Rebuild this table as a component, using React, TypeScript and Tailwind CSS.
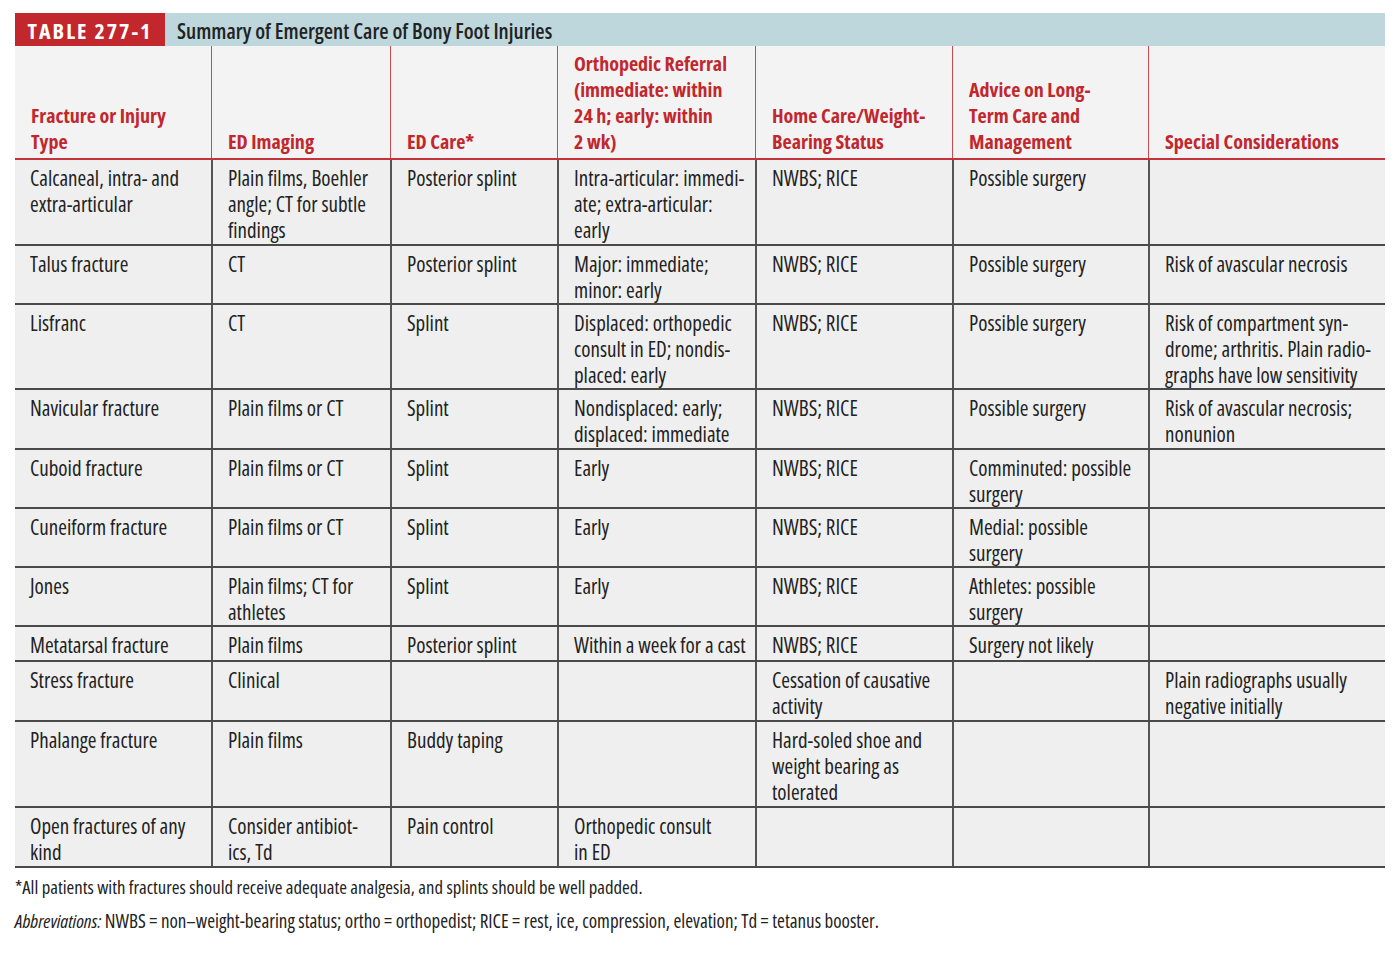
import React from 'react';

const headers: string[][] = [
  ['Fracture or Injury', 'Type'],
  ['ED Imaging'],
  ['ED Care*'],
  ['Orthopedic Referral', '(immediate: within', '24 h; early: within', '2 wk)'],
  ['Home Care/Weight-', 'Bearing Status'],
  ['Advice on Long-', 'Term Care and', 'Management'],
  ['Special Considerations'],
];

type Row = { h: string; cells: string[][] };

const rows: Row[] = [
  {
    h: 'h-[86px]',
    cells: [
      ['Calcaneal, intra- and', 'extra-articular'],
      ['Plain films, Boehler', 'angle; CT for subtle', 'findings'],
      ['Posterior splint'],
      ['Intra-articular: immedi-', 'ate; extra-articular:', 'early'],
      ['NWBS; RICE'],
      ['Possible surgery'],
      [],
    ],
  },
  {
    h: 'h-[59px]',
    cells: [
      ['Talus fracture'],
      ['CT'],
      ['Posterior splint'],
      ['Major: immediate;', 'minor: early'],
      ['NWBS; RICE'],
      ['Possible surgery'],
      ['Risk of avascular necrosis'],
    ],
  },
  {
    h: 'h-[85px]',
    cells: [
      ['Lisfranc'],
      ['CT'],
      ['Splint'],
      ['Displaced: orthopedic', 'consult in ED; nondis-', 'placed: early'],
      ['NWBS; RICE'],
      ['Possible surgery'],
      ['Risk of compartment syn-', 'drome; arthritis. Plain radio-', 'graphs have low sensitivity'],
    ],
  },
  {
    h: 'h-[60px]',
    cells: [
      ['Navicular fracture'],
      ['Plain films or CT'],
      ['Splint'],
      ['Nondisplaced: early;', 'displaced: immediate'],
      ['NWBS; RICE'],
      ['Possible surgery'],
      ['Risk of avascular necrosis;', 'nonunion'],
    ],
  },
  {
    h: 'h-[59px]',
    cells: [
      ['Cuboid fracture'],
      ['Plain films or CT'],
      ['Splint'],
      ['Early'],
      ['NWBS; RICE'],
      ['Comminuted: possible', 'surgery'],
      [],
    ],
  },
  {
    h: 'h-[59px]',
    cells: [
      ['Cuneiform fracture'],
      ['Plain films or CT'],
      ['Splint'],
      ['Early'],
      ['NWBS; RICE'],
      ['Medial: possible', 'surgery'],
      [],
    ],
  },
  {
    h: 'h-[59px]',
    cells: [
      ['Jones'],
      ['Plain films; CT for', 'athletes'],
      ['Splint'],
      ['Early'],
      ['NWBS; RICE'],
      ['Athletes: possible', 'surgery'],
      [],
    ],
  },
  {
    h: 'h-[35px]',
    cells: [
      ['Metatarsal fracture'],
      ['Plain films'],
      ['Posterior splint'],
      ['Within a week for a cast'],
      ['NWBS; RICE'],
      ['Surgery not likely'],
      [],
    ],
  },
  {
    h: 'h-[60px]',
    cells: [
      ['Stress fracture'],
      ['Clinical'],
      [],
      [],
      ['Cessation of causative', 'activity'],
      [],
      ['Plain radiographs usually', 'negative initially'],
    ],
  },
  {
    h: 'h-[86px]',
    cells: [
      ['Phalange fracture'],
      ['Plain films'],
      ['Buddy taping'],
      [],
      ['Hard-soled shoe and', 'weight bearing as', 'tolerated'],
      [],
      [],
    ],
  },
  {
    h: 'h-[60px]',
    cells: [
      ['Open fractures of any', 'kind'],
      ['Consider antibiot-', 'ics, Td'],
      ['Pain control'],
      ['Orthopedic consult', 'in ED'],
      [],
      [],
      [],
    ],
  },
];

const COLS = 'grid grid-cols-[196px_179px_167px_198px_197px_196px_237px]';

export default function App() {
  return (
    <div className="w-[1398px] h-[954px] bg-white pt-[13px] px-[15px] font-['Open_Sans',sans-serif] [font-stretch:75%]">
      <div className="w-[1370px]">
        {/* title bar */}
        <div className="flex h-[33px] bg-[#bdd7dd]">
          <div className="w-[150px] bg-[#c1272d] flex items-center justify-center pt-[2px] text-white font-bold text-[22px] tracking-[2px]">
            TABLE 277-1
          </div>
          <div className="pl-3 flex items-center pt-[2px] text-[21.3px] text-[#222] font-semibold">
            Summary of Emergent Care of Bony Foot Injuries
          </div>
        </div>

        {/* header */}
        <div className={`${COLS} h-[114px] bg-[#f3f3f3] border-b-[2px] border-[#c6323a]`}>
          {headers.map((lines, i) => (
            <div
              key={i}
              className={`flex flex-col justify-end pl-4 pb-[3px] text-[20px] leading-[26px] font-bold text-[#c1272d] ${i > 0 ? 'border-l border-[#c94a50]' : ''}`}
            >
              {lines.map((l, j) => (
                <div key={j} className="whitespace-nowrap">{l}</div>
              ))}
            </div>
          ))}
        </div>

        {/* body */}
        {rows.map((r, ri) => (
          <div key={ri} className={`${COLS} ${r.h} bg-[#efefef] border-b-[2px] border-[#4a4a4a]`}>
            {r.cells.map((lines, ci) => (
              <div
                key={ci}
                className={`pl-[15px] pt-[5px] text-[21px] leading-[26px] text-[#222] ${ci > 0 ? 'border-l-[2px] border-[#555]' : ''}`}
              >
                {lines.map((l, j) => (
                  <div key={j} className="whitespace-nowrap">{l}</div>
                ))}
              </div>
            ))}
          </div>
        ))}

        {/* footnotes */}
        <div className="mt-[7px] text-[18.7px] leading-[24px] text-[#222]">
          *All patients with fractures should receive adequate analgesia, and splints should be well padded.
        </div>
        <div className="mt-[10px] text-[19px] leading-[24px] text-[#222]">
          <span className="italic">Abbreviations:</span> NWBS = non–weight-bearing status; ortho = orthopedist; RICE = rest, ice, compression, elevation; Td = tetanus booster.
        </div>
      </div>
    </div>
  );
}
